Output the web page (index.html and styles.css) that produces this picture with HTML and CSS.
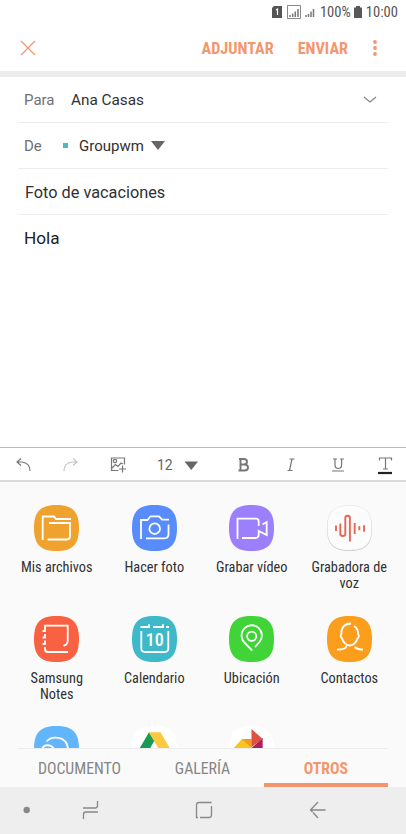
FILE: index.html
```html
<!DOCTYPE html>
<html lang="es">
<head>
<meta charset="utf-8">
<meta name="viewport" content="width=device-width, initial-scale=1">
<title>Redactar correo</title>
<link rel="stylesheet" href="styles.css">
</head>
<body>
<main class="phone">
  <div class="status">
    <svg class="status-icons" width="46" height="16" viewBox="0 0 46 16">
      <path d="M3 2h8v12H1V4z" fill="#555"/><path d="M5 6l1.500-1v6" fill="none" stroke="#fff" stroke-width="1.200"/>
      <path d="M16.500 1.500h13v13h-13z" fill="none" stroke="#888"/>
      <path d="M19 13v-2M21.700 13V9.500M24.300 13V7.500M27 13V5" stroke="#777" stroke-width="1.500"/>
      <path d="M35 13v-2M37.500 13v-3M40 13V7.500M42.500 13V5" stroke="#777" stroke-width="1.500"/>
    </svg>
    <span class="cond"><span>100%</span></span>
    <svg class="battery" width="8" height="13" viewBox="0 0 8 13"><path d="M2 0h4v1.500h2V12H0V1.500h2z" fill="#585858"/></svg>
    <span class="cond"><span>10:00</span></span>
  </div>
  <header class="header">
    <svg class="close" width="16" height="16" viewBox="0 0 16 16"><path d="M1 1l14 14M15 1L1 15" fill="none" stroke="#f4966d" stroke-width="1.200"/></svg>
    <span class="cond action attach"><span>ADJUNTAR</span></span>
    <span class="cond action send"><span>ENVIAR</span></span>
    <svg width="4" height="16" viewBox="0 0 4 16" fill="#f4966d"><circle cx="2" cy="2" r="1.900"/><circle cx="2" cy="8" r="1.900"/><circle cx="2" cy="14" r="1.900"/></svg>
  </header>
  <section class="fields">
    <div class="field"><span class="label para">Para</span><span class="to">Ana Casas</span>
      <svg class="chevron" width="14" height="8" viewBox="0 0 14 8"><path d="M1 1l6 5 6-5" fill="none" stroke="#888" stroke-width="1.300"/></svg></div>
    <div class="field"><span class="label de">De</span><i class="account"></i><span>Groupwm</span>
      <svg class="drop" width="14" height="9" viewBox="0 0 14 9"><path d="M0 0h14L7 9z" fill="#666"/></svg></div>
    <div class="field subject">Foto de vacaciones</div>
    <div class="message">Hola</div>
  </section>
  <div class="toolbar">
    <svg width="406" height="32" viewBox="0 0 406 32" fill="none" stroke="#777" stroke-width="1.200">
      <path d="M21 10.500l-4 3.500 4 3.500M17 14h5q8 1 8 9"/>
      <path d="M73 10.500l4 3.500-4 3.500M77 14h-5q-8 1-8 9" stroke="#c4c4c4"/>
      <path d="M118.500 22.500h-7V10h13V16.500M122.500 17.500v7M119 21h7M111.500 20.500l4-4 2.500 2 3-3.500 2 1"/><circle cx="115" cy="13" r="1.700"/>
      <path d="M184.500 13.500h13.500l-6.700 8.500z" fill="#666" stroke="none"/>
      <path d="M239 11h5q3 0 3 2.700t-3 2.800h-4 4.500q3.500 0 3.500 3t-3.500 3H238.500m2-11.500V22.500" stroke-width="1.900"/>
      <path d="M289.500 11h5M292 11L289.500 22.500M287.500 22.500h5"/>
      <path d="M333 11h4M340 11h4M335 11v5.500q0 4 3.300 4t3.300-4v-5.500M332 23h12"/>
      <path d="M379.500 12.500v-2.500h12V12.500M385.500 10v11M383 21h5"/><path d="M378 25h14" stroke="#222" stroke-width="2.200"/>
    </svg>
    <span class="size">12</span>
  </div>
  <section class="panel">
    <div class="grid">
      <div class="app"><svg class="icon" viewBox="0 0 45 46"><path class="tile" fill="#efa32e" d="M0 23C0 7 6 0 22.500 0S45 7 45 23 39 46 22.500 46 0 39 0 23"/><path d="M8.700 35V11.500H20l2 2.500h15M15 18h21v13q0 3.500-3 3.500H13.500"/></svg><span class="cond name"><span>Mis archivos</span></span></div>
      <div class="app"><svg class="icon" viewBox="0 0 45 46"><path class="tile" fill="#588bfc" d="M0 23C0 7 6 0 22.500 0S45 7 45 23 39 46 22.500 46 0 39 0 23"/><path d="M9 34V15h6.500l3-3.700H27l3 3.400h7M36.500 19.500V29q0 4.300-4 4.300H14"/><circle cx="22.700" cy="23.700" r="5.300"/></svg><span class="cond name"><span>Hacer foto</span></span></div>
      <div class="app"><svg class="icon" viewBox="0 0 45 46"><path class="tile" fill="#9c80fb" d="M0 23C0 7 6 0 22.500 0S45 7 45 23 39 46 22.500 46 0 39 0 23"/><path d="M8.500 34V13.700h18.500q2.700 0 2.700 2.700V21M33.500 19.500l4.200-2.500v13l-8-4v3.500q0 3.500-3.500 3.500H13"/></svg><span class="cond name"><span>Grabar vídeo</span></span></div>
      <div class="app"><svg class="icon" viewBox="0 0 45 46"><path class="tile" d="M0 23.500C0 7.500 6 .5 22.500 .5S45 7.500 45 23.500 39 46 22.500 46 0 39.500 0 23.500" fill="#d2d2d2"/><path class="tile" fill="#fcfcfc" d="M.5 22.800C.5 7.500 6 .8 22.500 .8S44.500 7.500 44.500 22.800 39 45 22.500 45 .5 38.500 .5 22.800"/><path stroke="#e86655" stroke-width="1.900" d="M9 20.500V26M13.300 18.500V29q0 2 2.500 2t2.500-2V13q0-2.300 2.300-2.300t2.300 2.300V36.500M27.700 18v11M32.300 21.300v4M37 20.300v6.400"/></svg><span class="cond name"><span>Grabadora de</span><span>voz</span></span></div>
      <div class="app"><svg class="icon" viewBox="0 0 45 46"><path class="tile" fill="#f86141" d="M0 23C0 7 6 0 22.500 0S45 7 45 23 39 46 22.500 46 0 39 0 23"/><path d="M8.500 15H11V9.700h22.700V25q0 2-1.500 3.500L29.500 30M8.500 21.500H11V18M8.500 28H11v-3.500M11 31v2q0 3 3 3h20"/></svg><span class="cond name"><span>Samsung</span><span>Notes</span></span></div>
      <div class="app"><svg class="icon" viewBox="0 0 45 46"><path class="tile" fill="#3fb9ca" d="M0 23C0 7 6 0 22.500 0S45 7 45 23 39 46 22.500 46 0 39 0 23"/><path d="M8.500 11H17V8.300M21 11h10V8.300M34 11h3M9.300 15v17.500q0 3.500 4 3.500h19q4 0 4-3.500V15"/><text class="date" x="22.700" y="29.700" text-anchor="middle">10</text></svg><span class="cond name"><span>Calendario</span></span></div>
      <div class="app"><svg class="icon" viewBox="0 0 45 46"><path class="tile" fill="#40d438" d="M0 23C0 7 6 0 22.500 0S45 7 45 23 39 46 22.500 46 0 39 0 23"/><circle cx="22.700" cy="20.300" r="4.600"/><path d="M23.300 34.700l-8-8.200A10.200 10.200 0 1 1 30.500 26l-4.500 5"/></svg><span class="cond name"><span>Ubicación</span></span></div>
      <div class="app"><svg class="icon" viewBox="0 0 45 46"><path class="tile" fill="#fc9e1d" d="M0 23C0 7 6 0 22.500 0S45 7 45 23 39 46 22.500 46 0 39 0 23"/><path d="M24 7.500c-6.500 0-10 4-9.700 11-1.200.5-.5 3 .8 4 .6 3.500 4.500 7 7.700 7s7-3.500 7.600-7c1.500-1 2-3.500.7-4 .3-4-1-6.500-4-8.500M19.500 29.500c0 3.500-4 4.200-9.500 4.200M27.500 31q3 2.700 8.500 2.700"/></svg><span class="cond name"><span>Contactos</span></span></div>
      <div class="app"><svg class="icon" viewBox="0 0 45 46"><path class="tile" fill="#61b5fa" d="M0 23C0 7 6 0 22.500 0S45 7 45 23 39 46 22.500 46 0 39 0 23"/><path d="M12.500 15.500c5-6 20-6 21.500 7M8 23c2-5 9-5 12 0"/></svg></div>
      <div class="app"><svg class="icon" viewBox="0 0 45 46"><path class="tile" fill="#fff" d="M0 23C0 7 6 0 22.500 0S45 7 45 23 39 46 22.500 46 0 39 0 23"/><path stroke="none" fill="#169b54" d="M5.500 26L17 6.300l5.300 8.500L16 26z"/><path stroke="none" fill="#fbc93d" d="M17 6.300h11.500L40 26H28.500z"/></svg></div>
      <div class="app"><svg class="icon" viewBox="0 0 45 46"><path class="tile" fill="#fff" d="M0 23C0 7 6 0 22.500 0S45 7 45 23 39 46 22.500 46 0 39 0 23"/><path stroke="none" fill="#fbc41f" d="M4.700 22L13 13h9.500v9z"/><path stroke="none" fill="#f29a22" d="M13 13h9.500v9z"/><path stroke="none" fill="#a8235b" d="M33.700 12v10H22.500z"/><path stroke="none" fill="#dc5142" d="M22.500 3l11.200 10L22.500 21z"/></svg></div>
    </div>
  </section>
  <nav class="tabs">
    <span class="tab cond"><span>DOCUMENTO</span></span>
    <span class="tab cond"><span>GALERÍA</span></span>
    <span class="tab cond active"><span>OTROS</span></span>
  </nav>
  <footer class="nav">
    <svg width="406" height="47" viewBox="0 0 406 47" fill="none" stroke="#888" stroke-width="1.300">
      <circle cx="26.700" cy="23" r="3.200" fill="#888" stroke="none"/>
      <path d="M83 21h12q2.500 0 2.500-2.500v-4.500M98 25H86q-2.500 0-2.500 2.500V32"/>
      <path d="M198 30.500h-1.500V18q0-2.500 2.500-2.500h12.500M200 30.500h9q2.500 0 2.500-2.500V19"/>
      <path d="M325.500 23H311M318 15l-7.500 8 2 2M313 25.500l5 5.500"/>
    </svg>
  </footer>
</main>
</body>
</html>
```
FILE: styles.css
```css
* { box-sizing: border-box; }
body { margin: 0; background: #fff; font-family: Roboto, "Liberation Sans", sans-serif; color: #303030; }
svg { display: block; flex: none; }
.phone { width: 406px; height: 834px; display: flex; flex-direction: column; overflow: hidden; }
.cond { font-family: "Roboto Condensed", Roboto, sans-serif; font-stretch: 75%; white-space: nowrap; }
.status { height: 24px; display: flex; align-items: center; justify-content: flex-end; padding-right: 8px; font-size: 14.600px; color: #555; }
.status-icons { margin-right: 3px; }
.battery { margin: 0 4px 0 3px; }
.header { height: 47px; display: flex; align-items: center; padding: 0 29px 0 20px; }
.attach { margin-left: auto; margin-right: 24px; }
.send { margin-right: 25px; }
.action { color: #f4966d; font-size: 16.200px; font-weight: 700; padding-top: 1px; }
.fields { height: 376px; border-top: 6px solid #ededed; padding: 0 18px; }
.field { height: 46px; border-bottom: 1px solid #ededed; display: flex; align-items: center; padding: 0 11px 0 6px; font-size: 15px; }
.to { font-size: 15.300px; }
.label { color: #707070; }
.para { width: 47px; }
.de { width: 39px; }
.account { width: 5px; height: 5px; background: #51b6c5; margin-right: 11px; }
.chevron { margin-left: auto; }
.drop { margin-left: 7px; }
.subject { padding-left: 7px; padding-top: 1px; font-size: 16.300px; }
.message { height: 46px; padding-left: 6px; line-height: 46px; font-size: 17.200px; color: #222; }
.toolbar { height: 35px; border-top: 1px solid #bbb; border-bottom: 2px solid #dadada; display: grid; align-items: center; }
.toolbar > * { grid-area: 1 / 1; }
.size { padding: 2px 0 0 157px; font-size: 14px; color: #666; }
.panel { height: 266px; padding: 23px 8px 0; background: #fafafa; overflow: hidden; }
.grid { display: grid; grid-template-columns: repeat(4, 1fr); grid-auto-rows: 110.500px; }
.app { display: flex; flex-direction: column; align-items: center; }
.icon { width: 45px; height: 46px; fill: none; stroke: #fff; stroke-width: 1.800; }
.tile { stroke: none; }
.date { font: 500 18px "Roboto Condensed", Roboto, sans-serif; font-stretch: 75%; fill: #fff; stroke: none; }
.name { margin-top: 8px; display: flex; flex-direction: column; align-items: center; font-size: 14.300px; line-height: 16px; color: #303030; }
.tabs { height: 39px; padding: 0 18px; background: #fafafa; display: grid; grid-template-columns: 123px 123px 124px; }
.tab { border-top: 1px solid #ededed; display: flex; align-items: center; justify-content: center; font-size: 15.800px; color: #858585; }
.active { border-bottom: 4px solid #f4966d; padding-top: 4px; color: #f4966d; font-weight: 700; }
.nav { height: 47px; background: #eee; }
```
